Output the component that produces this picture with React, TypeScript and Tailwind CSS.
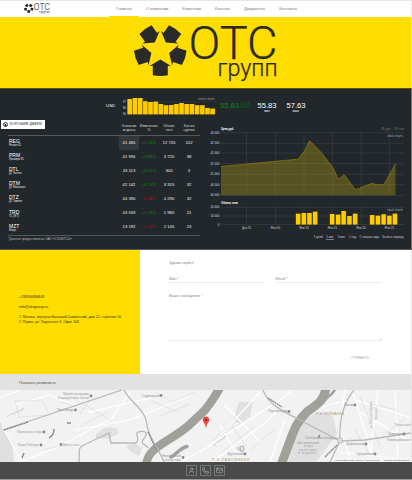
import clsx from "clsx";
import { Mail, Phone, User } from "lucide-react";

const nav = [
  { label: "Главная", width: "w-[30px]", active: true },
  { label: "О компании", width: "w-[36px]" },
  { label: "Клиентам", width: "w-[33px]" },
  { label: "Каталог", width: "w-[29px]" },
  { label: "Документы", width: "w-[35px]" },
  { label: "Контакты", width: "w-[32px]" },
];

const rows = [
  { code: "REG", name: "Регион 42", value: "41 465", change: "+1.12%", volume: "12 720", deals: "102" },
  { code: "PRM", name: "Премиум 95", value: "41 994", change: "+0.83%", volume: "3 720", deals: "38" },
  { code: "DTL", name: "ДТ Летнее", value: "43 113", change: "+0.01%", volume: "300", deals: "3" },
  { code: "DTM", name: "ДТ Межсезон.", value: "42 142", change: "+0.16%", volume: "3 315", deals: "32" },
  { code: "DTZ", name: "ДТ Зимнее", value: "44 390", change: "-0.38%", volume: "4 290", deals: "32" },
  { code: "TRD", name: "ТС (ЖТ)", value: "43 533", change: "+1.48%", volume: "1 980", deals: "21" },
  { code: "MZT", name: "Мазут", value: "13 192", change: "-1.24%", volume: "2 145", deals: "23" },
];

const usdTops = [99, 98, 98, 101.3, 102, 101.7, 104, 105.3, 105, 104, 103, 104, 104, 105.3, 105.3, 108, 108.7];

const priceGrid = [
  { y: 132.7, label: "43 000" },
  { y: 143.3, label: "42 500" },
  { y: 153, label: "42 000" },
  { y: 163.6, label: "41 500" },
  { y: 174.3, label: "41 000" },
  { y: 184.7, label: "40 500" },
  { y: 195.3, label: "40 000" },
];

const volumeGrid = [
  { y: 207.3, label: "20 000" },
  { y: 216, label: "10 000" },
  { y: 224.5, label: "0" },
];

const dates = [
  { x: 246.6, label: "Дек 31" },
  { x: 275.4, label: "Янв 05" },
  { x: 304, label: "Янв 10" },
  { x: 332.4, label: "Янв 15" },
  { x: 361, label: "Янв 20" },
  { x: 389.4, label: "Янв 25" },
];

const volumes = [
  [296, 213.7], [301.7, 213], [307.3, 213], [313, 211.7],
  [330, 214], [336, 214.7], [341.5, 211], [347.3, 216], [353, 213.7],
  [370, 215], [375.8, 215.7], [381.5, 214.3], [387.2, 215.7], [392.8, 213.7],
];

const periods = [
  { label: "7 дней", width: "w-[9px]" },
  { label: "1 мес", width: "w-[8px]", active: true },
  { label: "3 мес", width: "w-[8px]" },
  { label: "1 год", width: "w-[7px]" },
  { label: "С начала года", width: "w-[19px]" },
  { label: "За весь период", width: "w-[21px]" },
];

function Emblem() {
  return (
    <g fill="currentColor">
      {[0, 72, 144, 216, 288].map((angle) => (
        <path
          key={angle}
          transform={`rotate(${angle})`}
          d="M0 9.4 L10.8 15.9 L7.5 15.7 L7.5 25.2 Q0 26.8 -7.5 25.2 L-7.5 15.7 L-10.8 15.9 Z"
        />
      ))}
    </g>
  );
}

function Logo({ className }: { className?: string }) {
  return (
    <svg viewBox="134 22 144 60" className={clsx("overflow-visible", className)}>
      <g transform="translate(160.3 50)">
        <Emblem />
      </g>
      <g fill="currentColor" stroke="currentColor" strokeWidth=".25" fontFamily="Roboto, sans-serif" fontWeight="300">
        <text x="188.5" y="58.6" fontSize="47" textLength="89" lengthAdjust="spacingAndGlyphs">ОТС</text>
        <text x="217.6" y="75.8" fontSize="23.5" textLength="60" lengthAdjust="spacingAndGlyphs">групп</text>
      </g>
    </svg>
  );
}

function Header() {
  return (
    <header className="flex h-[17px] border-t border-[#e6e6e6] bg-white">
      <div className="w-[109px] pt-[2px] pl-[24px]">
        <Logo className="h-[11px] w-[26px] text-[#222]" />
      </div>
      <nav className="flex text-[4.1px] text-[#777]">
        {nav.map((item) => (
          <a
            key={item.label}
            className={clsx(
              "flex items-center justify-center border-b pt-px whitespace-nowrap",
              item.width,
              item.active ? "border-[#fd0]" : "border-white",
            )}
          >
            {item.label}
          </a>
        ))}
      </nav>
    </header>
  );
}

function UsdBars() {
  return (
    <svg viewBox="121 95 96 22" className="h-[22px] w-[96px]">
      <path d="M127 101.8H216M127 108H216" stroke="#3b3f43" strokeWidth=".5" />
      {usdTops.map((y, i) => (
        <g key={i}>
          <rect x={127.2 + i * 5.18} y={y} width="5.2" height={114.3 - y} fill="#8f7a0c" />
          <rect x={127.6 + i * 5.18} y={y} width="4.3" height={114.3 - y} fill="#fc0" />
        </g>
      ))}
      <g fill="#ccc" fontSize="3" textAnchor="end">
        <text x="126" y="103">97</text>
        <text x="126" y="109">96</text>
        <text x="126" y="115">95</text>
      </g>
      <text x="198" y="99.6" fontSize="3" fill="#aaa" textLength="16.5">stock charts</text>
    </svg>
  );
}

function Ticker() {
  return (
    <div className="flex h-[31px] pt-[6px] pl-[106px]">
      <div className="w-[15px] pt-[8px] text-[4.4px] leading-[5px] text-white">USD</div>
      <UsdBars />
      <div className="flex w-[40px] pt-[7px] pl-[3px] text-[#078a0c]">
        <span className="text-[7.6px] leading-[8px]">55.83</span>
        <span className="flex flex-col pt-px pl-[1px] text-[2.6px] leading-[3px] text-[#077a0c]">
          <span>+0.2318</span>
          <span>(0.42%)</span>
        </span>
      </div>
      <div className="flex w-[20px] flex-col items-center pt-[7px] text-white">
        <span className="text-[7.6px] leading-[8px]">55.83</span>
        <span className="text-[3px] leading-[2px]">мин</span>
      </div>
      <div className="ml-[9px] flex w-[20px] flex-col items-center pt-[7px] text-white">
        <span className="text-[7.6px] leading-[8px]">57.63</span>
        <span className="text-[3px] leading-[2px]">макс</span>
      </div>
    </div>
  );
}

function IndexTable() {
  return (
    <div className="flex w-[205px] flex-col">
      <div className="ml-px flex h-[9px] w-[44px] items-center gap-[1.5px] bg-white pl-[2px] text-[#222]">
        <svg viewBox="0 0 6 6" className="size-[5px]">
          <circle cx="3" cy="3" r="2.4" fill="none" stroke="currentColor" strokeWidth="1" />
          <path d="M2 5V3L3 2l1 1v2z" fill="currentColor" />
        </svg>
        <span className="text-[3.7px] leading-none whitespace-nowrap">ХОРОШИЕ ДВЕРИ</span>
      </div>
      <div className="ml-[8px] w-[192px]">
        <div className="-mt-[5px] grid h-[11px] grid-cols-[111px_20px_20px_20px_20px] text-center text-[3.4px] leading-[4px] text-[#ddd]">
          <span />
          <span>Значение индекса</span>
          <span className="whitespace-nowrap">Изменение,<br />%</span>
          <span>Объем,<br />тонн</span>
          <span>Кол-во<br />сделок</span>
        </div>
        <div className="border-y border-[#55585b]">
          {rows.map((row, i) => (
            <div
              key={row.code}
              className="grid h-[14.1px] grid-cols-[111px_20px_20px_20px_20px] items-center text-center text-[4.2px] text-[#eee]"
            >
              <div className="flex flex-col pl-px text-left">
                <span className="text-[5px] leading-[5px] text-white">{row.code}</span>
                <span className="text-[2.6px] leading-[3px]">{row.name}</span>
              </div>
              <span className={clsx("flex h-full items-center justify-center", i === 0 && "bg-[#33383d]")}>
                {row.value}
              </span>
              <span className={row.change.startsWith("+") ? "text-[#078a0c]" : "text-[#b30b12]"}>{row.change}</span>
              <span>{row.volume}</span>
              <span>{row.deals}</span>
            </div>
          ))}
        </div>
        <p className="pt-px text-[3.2px] leading-[4px] text-[#bbb]">*Данные предоставлены ЗАО «СПбМТСБ»</p>
      </div>
    </div>
  );
}

function StockCharts() {
  return (
    <div className="flex w-[206px] flex-col">
      <svg viewBox="205 120 206 113" className="h-[113px] w-[206px]">
        <g stroke="#3d4145" strokeWidth=".6">
          {dates.map((d) => (
            <path key={d.x} d={`M${d.x} 132.7V195.3M${d.x} 207.3V224.5`} />
          ))}
          {priceGrid.map((g) => (
            <path key={g.y} d={`M221 ${g.y}H404`} />
          ))}
          {volumeGrid.map((g) => (
            <path key={g.y} d={`M221 ${g.y}H404`} />
          ))}
        </g>
        <path
          d="M221 195.3V166.5L298 159.2L304.5 151L309.6 140.7L314 145L322 153.5L332.5 167L338.5 179.5L344 174.6L355.5 189.8L372 183.3L377 184.8L384 184.5L387 179L395.5 164V195.3Z"
          fill="#fd0"
          fillOpacity=".24"
        />
        <path
          d="M221 166.5L298 159.2L304.5 151L309.6 140.7L314 145L322 153.5L332.5 167L338.5 179.5L344 174.6L355.5 189.8L372 183.3L377 184.8L384 184.5L387 179L395.5 164"
          fill="none"
          stroke="#927d0b"
          strokeWidth=".7"
        />
        {volumes.map(([x, y]) => (
          <g key={x}>
            <rect x={x - 0.5} y={y} width="5.2" height={224.5 - y} fill="#6d5f12" />
            <rect x={x} y={y} width="4.3" height={224.5 - y} fill="#fc0" />
          </g>
        ))}
        <g fill="#ddd" fontSize="2.9" textAnchor="end">
          {[...priceGrid, ...volumeGrid].map((g) => (
            <text key={g.y} x="219.3" y={g.y + 1.1}>{g.label}</text>
          ))}
        </g>
        <g fill="#ccc" fontSize="3" textAnchor="middle">
          {dates.map((d) => (
            <text key={d.x} x={d.x} y="228.9">{d.label}</text>
          ))}
        </g>
        <g fontSize="3.2" fill="#eee" fontWeight="bold">
          <text x="221" y="129.5" textLength="13">Цена, руб.</text>
          <text x="221" y="204" textLength="17">Объем, тонн</text>
        </g>
        <text x="381" y="129.5" fontSize="3.2" fill="#777" textLength="23">28 дек - 28 янв</text>
        <g fontSize="3" fill="#aaa">
          <text x="387" y="136.5" textLength="16">stock charts</text>
          <text x="387" y="211" textLength="16">stock charts</text>
        </g>
      </svg>
      <div className="flex justify-end gap-[3.5px] pt-[2px] pr-[8px] text-[3px] leading-[4px] whitespace-nowrap text-[#ccc]">
        {periods.map((p) => (
          <span key={p.label} className={clsx("text-center", p.width, p.active && "border-b border-[#777]")}>
            {p.label}
          </span>
        ))}
      </div>
    </div>
  );
}

function Contacts() {
  return (
    <section className="flex h-[124px] bg-white">
      <div className="w-[139.6px] bg-[#fd0] pt-[44.5px] pl-[19px] text-[3.45px] leading-[5.2px] whitespace-nowrap text-[#333]">
        <p className="text-[3.8px]">+74956486843</p>
        <p className="mt-[5.2px] text-[3.8px]">info@otsgroup.ru</p>
        <p className="mt-[5.2px]">1. Москва, переулок Большой Саввинский, дом 12, строение 16</p>
        <p>2. Пермь, ул. Подлесная 3, Офис 303</p>
      </div>
      <form className="flex flex-1 flex-col pt-[11px] pr-[29px] pl-[29.4px] text-[3.85px] leading-[5px] text-[#888]">
        <p>Здравствуйте!</p>
        <div className="mt-[11px] flex gap-[10.5px]">
          <label className="h-[6px] w-[96px] border-b border-[#ececec]">Имя *</label>
          <label className="h-[6px] flex-1 border-b border-[#ececec]">Email *</label>
        </div>
        <label className="mt-[11px] flex h-[47px] justify-between border-b border-[#ececec]">
          Ваше сообщение *
          <svg viewBox="0 0 2 2" className="size-[2px] self-end">
            <path d="M0 2L2 0M1.2 2L2 1.2" stroke="#999" strokeWidth=".4" />
          </svg>
        </label>
        <button type="button" className="mt-[15px] mr-[13px] self-end text-[3.1px] leading-[4px] text-[#aaa]">
          ОТПРАВИТЬ
        </button>
      </form>
    </section>
  );
}

function CityMap() {
  return (
    <svg viewBox="0 390 411 72" className="h-[72px] w-[411px] bg-[#f2f2f2]">
      <g fill="#e0e0e0">
        <path d="M0 422L12 444L14 462H0Z" />
        <path d="M96 434l10-7 11 1 1 6-8 4-14 1z" />
        <path d="M126 446l8-3 8 5-3 8-8-4z" />
        <path d="M317 412l16 4 4 18-12 16-9 12h-28l6-20 10-22z" />
        <path d="M239 402h14l-3 14-10 7-7-2z" />
      </g>
      <g fill="none" stroke="#fff" strokeWidth="1.2">
        <path d="M2 426L22 462M0 398L20 390M14 405L50 395L90 412L150 398M130 392L112 418L60 446L20 462M75 430L130 420L190 396" />
        <path d="M180 462L212 445L260 392M208 446L280 400L292 390M215 460L262 425L278 411M345 390L340 430L352 462M352 390L368 440L372 462M378 390L370 460M395 390L398 462M340 452L411 460M270 462L285 420" />
        <path d="M220 425L235 452M225 405L260 442M310 410L348 400M355 400L411 418M360 412L411 442" />
      </g>
      <g fill="none" stroke="#d8d8d8" strokeWidth=".6">
        <path d="M15 401h28l6 14-30 2zM62 402l26 8M84 424l24-12M42 450l28-6M90 400l-10 14M70 396l40 24M155 392l18 10 22-10M150 400l28 12M160 416l30-12" />
        <path d="M212 441l40-25M222 452l32-25M216 436l22-15M250 450l26-22M360 396l20 50M370 404l28 6M382 436l24-18M355 430l18 30M232 426l14 20" />
      </g>
      <path
        d="M221 386C214 398 210 404 205 410L188 426C178 435 163 442 155 449C149 454 147 458 146 465"
        fill="none" stroke="#a0a19b" strokeWidth="8.5"
      />
      <path d="M326 386C325 400 318 404 308 411C297 421 294 430 290 441L281 465" fill="none" stroke="#a0a19b" strokeWidth="9" />
      <path d="M335 389C334 393 329 396 325 400" fill="none" stroke="#a0a19b" strokeWidth="2.5" />
      <path d="M171 457C177 454 181 447 187 446.5" fill="none" stroke="#a0a19b" strokeWidth="3.5" strokeLinecap="round" />
      <g fill="none" stroke="#b9b9b9" strokeWidth="1.3">
        <path d="M3 430L122 390M124 390C129 401 144 409 146 420C148 438 158 447 164 462" />
        <path d="M263 390C268 404 282 411 300 420L340 441L365 440L411 433" />
        <path d="M354 390C344 402 339 420 340 441L330 462" />
        <path d="M79 462C80 453 77 447 84 445L109 433L111 443L136 443C141 438 134 434 138 432C146 430 149 433 143 440C140 445 146 444 148 448" />
        <path d="M238 447C237 451 241 448 243 453M240 447l3-1 1 4-3 1z" />
      </g>
      <g fill="none" stroke="#888" strokeWidth="1.4">
        <path d="M4 430L28 422M148 432L157 451M268 398L282 407M325 457L337 445" strokeDasharray="2 .6" />
        <path d="M49 438Q54 435 54 429M67 423h4M22 458l2-5M318 438l2-3" />
      </g>
      <g fill="#888">
        {[[91, 396], [75.5, 410], [44, 432], [41, 445], [61, 444.5], [161, 395.5], [183, 457.5], [289, 411.5], [355, 405], [245, 454], [366, 444], [375, 454], [404, 434]].map(([x, y]) => (
          <circle key={`${x}-${y}`} cx={x} cy={y} r="1.4" />
        ))}
      </g>
      <rect x="337.5" y="438" width="5" height="5" fill="#ddd" stroke="#aaa" strokeWidth=".5" />
      <g fontSize="3.4" fill="#999">
        <text x="63" y="395" textLength="26">Музей-панорама</text>
        <text x="58" y="399" textLength="31">Бородинская битва</text>
        <text x="57" y="411" textLength="17">Парк Победы</text>
        <text x="17" y="433" textLength="25">Поклонная гора</text>
        <text x="18" y="446" textLength="21">Парк Победы</text>
        <text x="63" y="446" textLength="16">Минская</text>
        <text x="142" y="396.5" textLength="18">Студенческая</text>
        <text x="162" y="457" textLength="19">Новодевичий</text>
        <text x="165" y="461" textLength="16">монастырь</text>
        <text x="268" y="412" textLength="20">Парк культуры</text>
        <text x="344" y="406" textLength="10">Полянка</text>
        <text x="227" y="455" textLength="17">Фрунзенская</text>
        <text x="305" y="438.5" textLength="32">Октябрьская площадь</text>
        <text x="346" y="445" textLength="19">Добрынинская</text>
        <text x="356" y="455" textLength="18">Серпуховская</text>
        <text x="388" y="434.5" textLength="15">Павелецкая</text>
        <text x="387" y="441" textLength="23.5" fontSize="3">Павелецкий вокзал</text>
        <text x="394.5" y="426" textLength="16">Таганская</text>
        <text x="297" y="443.5" textLength="22">Центральный</text>
        <text x="304" y="447" textLength="9">парк</text>
        <text x="299" y="450.5" textLength="18">культуры</text>
        <text x="298" y="454" textLength="18">и отдыха</text>
      </g>
      <g fontSize="2.6" fill="#aaa">
        <text transform="translate(7 417) rotate(-24)">ул. Кутузовский</text>
        <text transform="translate(214 446) rotate(-38)">ул. Плющиха</text>
        <text transform="translate(372 428) rotate(-90)">ул. Большая Ордынка</text>
        <text transform="translate(377 420) rotate(-90)">Пятницкая</text>
      </g>
      <g fontSize="3.6" fill="#b19a7b">
        <text x="316" y="414.5" textLength="28">Р-Н ЯКИМАНКА</text>
        <text x="212" y="461.2" textLength="37">Р-Н ХАМОВНИКИ</text>
      </g>
      <rect x="334" y="457.8" width="77" height="4.2" fill="#f5f5f5" />
      <g fontSize="2.3" fill="#555">
        <text x="335" y="460.9">Картографические данные © 2015 Google</text>
        <text x="384" y="460.9">Условия использования</text>
      </g>
      <path d="M206 427.5C205.5 423 203 422.5 203 419.8a3 3 0 0 1 6 0C209 422.5 206.5 423 206 427.5Z" fill="#f2443c" stroke="#c9352f" strokeWidth=".3" />
      <circle cx="206" cy="420" r="1" fill="#7b1c18" />
    </svg>
  );
}

export default function App() {
  return (
    <div className="flex h-[480px] w-[412px] flex-col overflow-hidden bg-[#e6e6e6] pr-px font-['Liberation_Sans',Arial,sans-serif]">
      <Header />
      <section className="flex h-[71px] bg-[#fd0] pt-[5px] pl-[134px]">
        <Logo className="h-[60px] w-[144px] text-[#2a2a28]" />
      </section>
      <section className="-mr-px h-[162px] border-t border-r border-b border-t-[#5e5312] border-r-[#777] border-b-[#55585b] bg-[#22272c]">
        <Ticker />
        <div className="flex">
          <IndexTable />
          <StockCharts />
        </div>
      </section>
      <Contacts />
      <div className="h-[16px] bg-[#e2e2e2] pt-[6px] pl-[19px] text-[3.9px] leading-[5px] text-[#555]">
        Показать реквизиты
      </div>
      <CityMap />
      <footer className="-mr-px flex h-[18px] justify-center gap-[3px] border-b border-[#999] bg-[#4a4a4a] pt-[3px] pr-px">
        {[User, Phone, Mail].map((Icon, i) => (
          <a key={i} className="flex size-[11px] items-center justify-center border border-[#72777a] text-[#b5b8ba]">
            <Icon className="size-[7px]" />
          </a>
        ))}
      </footer>
    </div>
  );
}
